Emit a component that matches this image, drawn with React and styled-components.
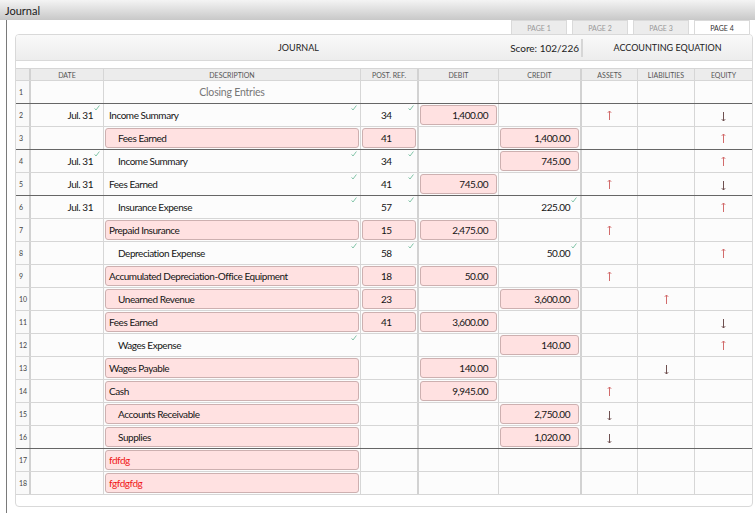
import React from "react";
import styled, { createGlobalStyle } from "styled-components";

const GlobalStyle = createGlobalStyle`
  html, body {
    margin: 0;
    padding: 0;
    background: #ffffff;
  }
  body {
    font-family: Lato, "Open Sans", sans-serif;
    color: #222;
  }
`;

// column widths, the thick ones carry a 2px right border
const COLS = "15px 73px 257px 58px 80px 83px 56px 57px 57px";
const THICK = [0, 3, 5];

const rows = [
  { desc: "Closing Entries", title: true, sep: true },
  {
    date: "Jul. 31", dateOk: true, desc: "Income Summary", descOk: true,
    ref: "34", refOk: true, debit: "1,400.00", debitIn: true, assets: "up", equity: "down",
  },
  {
    desc: "Fees Earned", indent: true, descIn: true, ref: "41", refIn: true,
    credit: "1,400.00", creditIn: true, equity: "up", sep: true,
  },
  {
    date: "Jul. 31", dateOk: true, desc: "Income Summary", indent: true, descOk: true,
    ref: "34", refOk: true, credit: "745.00", creditIn: true, equity: "up",
  },
  {
    date: "Jul. 31", desc: "Fees Earned", descOk: true, ref: "41", refOk: true,
    debit: "745.00", debitIn: true, assets: "up", equity: "down", sep: true,
  },
  {
    date: "Jul. 31", desc: "Insurance Expense", indent: true, descOk: true,
    ref: "57", refOk: true, credit: "225.00", creditOk: true, equity: "up",
  },
  {
    desc: "Prepaid Insurance", descIn: true, ref: "15", refIn: true,
    debit: "2,475.00", debitIn: true, assets: "up",
  },
  {
    desc: "Depreciation Expense", indent: true, descOk: true, ref: "58", refOk: true,
    credit: "50.00", creditOk: true, equity: "up",
  },
  {
    desc: "Accumulated Depreciation-Office Equipment", descIn: true, ref: "18", refIn: true,
    debit: "50.00", debitIn: true, assets: "up",
  },
  {
    desc: "Unearned Revenue", indent: true, descIn: true, ref: "23", refIn: true,
    credit: "3,600.00", creditIn: true, liab: "up",
  },
  {
    desc: "Fees Earned", descIn: true, ref: "41", refIn: true,
    debit: "3,600.00", debitIn: true, equity: "down",
  },
  {
    desc: "Wages Expense", indent: true, descOk: true,
    credit: "140.00", creditIn: true, equity: "up",
  },
  { desc: "Wages Payable", descIn: true, debit: "140.00", debitIn: true, liab: "down" },
  { desc: "Cash", descIn: true, debit: "9,945.00", debitIn: true, assets: "up" },
  {
    desc: "Accounts Receivable", indent: true, descIn: true,
    credit: "2,750.00", creditIn: true, assets: "down",
  },
  {
    desc: "Supplies", indent: true, descIn: true,
    credit: "1,020.00", creditIn: true, assets: "down", sep: true,
  },
  { desc: "fdfdg", descIn: true, bad: true },
  { desc: "fgfdgfdg", descIn: true, bad: true },
];

const Window = styled.div`
  width: 755px;
  height: 513px;
  overflow: hidden;
`;

const TitleBar = styled.div`
  height: 20px;
  display: flex;
  align-items: center;
  padding-left: 5px;
  background: linear-gradient(#f4f4f4, #c8c8c8);
  font-size: 11px;
  color: #1a1a1a;
`;

const Body = styled.div`
  height: 493px;
  margin-left: 6px;
  border-left: 1px solid #7a7a7a;
  padding: 0 2px 0 8px;
`;

const Tabs = styled.div`
  height: 14px;
  display: flex;
  justify-content: flex-end;
  gap: 5px;
  padding-right: 3px;
`;

const Tab = styled.div`
  width: 56px;
  box-sizing: border-box;
  border: 1px solid #dadada;
  border-bottom: none;
  background: ${({ $active }) => ($active ? "#ffffff" : "#ececec")};
  color: ${({ $active }) => ($active ? "#333" : "#999")};
  font-size: 7px;
  display: flex;
  align-items: center;
  justify-content: center;
  padding-top: 1px;
`;

const Panel = styled.div`
  height: 473px;
  box-sizing: border-box;
  border: 1px solid #d9d9d9;
  border-radius: 4px;
  overflow: hidden;
`;

const Header = styled.div`
  height: 25px;
  display: grid;
  grid-template-columns: 565px 1fr;
  align-items: center;
  background: linear-gradient(#f9f9f9, #ededed);
  border-bottom: 1px solid #d9d9d9;
`;

const HeaderLeft = styled.div`
  display: grid;
  grid-template-columns: 1fr auto 1fr;
  align-items: center;
  font-size: 9px;
  color: #222;
`;

const Score = styled.span`
  justify-self: end;
  font-size: 10px;
  padding-right: 2px;
`;

const HeaderRight = styled.div`
  height: 18px;
  border-left: 2px solid #d6d6d6;
  display: flex;
  align-items: center;
  justify-content: center;
  font-size: 9px;
  color: #222;
`;

const Table = styled.div`
  margin-top: 7px;
`;

const Row = styled.div`
  display: grid;
  grid-template-columns: ${COLS};
  height: ${({ $head }) => ($head ? "13px" : "23px")};
  box-sizing: border-box;
  border-top: ${({ $head }) => ($head ? "1px solid #d6d6d6" : "none")};
  border-bottom: 1px solid ${({ $sep }) => ($sep ? "#666" : "#d6d6d6")};
  background: ${({ $head }) => ($head ? "#ececec" : "#fcfcfc")};
`;

const Cell = styled.div`
  position: relative;
  box-sizing: border-box;
  border-right: ${({ $thick, $last }) =>
    $last ? "none" : $thick ? "2px solid #d2d2d2" : "1px solid #d6d6d6"};
  display: flex;
  align-items: center;
  justify-content: ${({ $align }) => $align || "flex-start"};
  padding: ${({ $pad }) => $pad || "0"};
  font-size: 10px;
  letter-spacing: -0.45px;
  color: #151515;
  white-space: nowrap;
  min-width: 0;
`;

const HeadCell = styled(Cell)`
  justify-content: center;
  font-size: 7px;
  letter-spacing: 0;
  color: #555;
  padding-top: 1px;
`;

const RowNum = styled(Cell)`
  font-size: 7px;
  letter-spacing: 0;
  color: #444;
  padding-left: 3px;
  background: #f9f9f9;
`;

const Field = styled.div`
  flex: 1;
  align-self: stretch;
  margin: 1px;
  box-sizing: border-box;
  border: 1px solid #cdb0b0;
  border-radius: 3px;
  background: #ffe1e1;
  display: flex;
  align-items: center;
  justify-content: ${({ $align }) => $align || "flex-start"};
  padding: ${({ $pad }) => $pad || "0"};
  color: ${({ $bad }) => ($bad ? "#f01818" : "#151515")};
`;

const Title = styled.span`
  flex: 1;
  text-align: center;
  color: #777777;
  font-size: 10.5px;
  letter-spacing: -0.2px;
`;

const Tick = styled.svg`
  position: absolute;
  top: 1px;
  right: 3px;
`;

const ArrowWrap = styled.div`
  flex: 1;
  display: flex;
  justify-content: center;
  padding-top: ${({ $dir }) => ($dir === "down" ? "3px" : "0")};
`;

const Check = () => (
  <Tick width="6" height="6" viewBox="0 0 6 6">
    <path d="M0.6 3.4 L2 5 L5.4 0.5" stroke="#82c4a8" strokeWidth="1" fill="none" />
  </Tick>
);

const Arrow = ({ dir }) => (
  <ArrowWrap $dir={dir}>
    <svg width="5" height="10" viewBox="0 0 5 10">
      {dir === "up" ? (
        <path d="M2.5 1 V10 M0.8 2.8 L2.5 1 L4.2 2.8" stroke="#d26b6b" strokeWidth="1" fill="none" />
      ) : (
        <path d="M2.5 0 V9 M0.8 7.2 L2.5 9 L4.2 7.2" stroke="#6f5050" strokeWidth="1" fill="none" />
      )}
    </svg>
  </ArrowWrap>
);

// one cell that may hold plain text, a pink field, and a tick
const Entry = ({ value, field, ok, align, pad, fieldPad, thick, bad }) => (
  <Cell $thick={thick} $align={align} $pad={field ? "0" : pad}>
    {field ? (
      <Field $align={align} $pad={fieldPad} $bad={bad}>
        {value}
      </Field>
    ) : (
      value
    )}
    {ok && <Check />}
  </Cell>
);

const heads = ["", "DATE", "DESCRIPTION", "POST. REF.", "DEBIT", "CREDIT", "ASSETS", "LIABILITIES", "EQUITY"];

const App = () => {
  return (
    <Window>
      <GlobalStyle />
      <TitleBar>Journal</TitleBar>
      <Body>
        <Tabs>
          <Tab>PAGE 1</Tab>
          <Tab>PAGE 2</Tab>
          <Tab>PAGE 3</Tab>
          <Tab $active>PAGE 4</Tab>
        </Tabs>
        <Panel>
          <Header>
            <HeaderLeft>
              <span />
              <span>JOURNAL</span>
              <Score>Score: 102/226</Score>
            </HeaderLeft>
            <HeaderRight>ACCOUNTING EQUATION</HeaderRight>
          </Header>
          <Table>
            <Row $head>
              {heads.map((h, i) => (
                <HeadCell key={i} $thick={THICK.includes(i)} $last={i === 8}>
                  {h}
                </HeadCell>
              ))}
            </Row>
            {rows.map((r, i) => (
              <Row key={i} $sep={r.sep}>
                <RowNum $thick>{i + 1}</RowNum>
                <Entry value={r.date} ok={r.dateOk} align="flex-end" pad="0 10px 0 0" />
                {r.title ? (
                  <Cell>
                    <Title>{r.desc}</Title>
                  </Cell>
                ) : (
                  <Entry
                    value={r.desc}
                    field={r.descIn}
                    ok={r.descOk}
                    bad={r.bad}
                    pad={r.indent ? "0 0 0 14px" : "0 0 0 5px"}
                    fieldPad={r.indent ? "0 0 0 12px" : "0 0 0 3px"}
                  />
                )}
                <Entry
                  value={r.ref}
                  field={r.refIn}
                  ok={r.refOk}
                  thick
                  pad="0 0 0 20px"
                  fieldPad="0 0 0 18px"
                />
                <Entry
                  value={r.debit}
                  field={r.debitIn}
                  align="flex-end"
                  pad="0 10px 0 0"
                  fieldPad="0 8px 0 0"
                />
                <Entry
                  value={r.credit}
                  field={r.creditIn}
                  ok={r.creditOk}
                  thick
                  align="flex-end"
                  pad="0 10px 0 0"
                  fieldPad="0 8px 0 0"
                />
                <Cell>{r.assets && <Arrow dir={r.assets} />}</Cell>
                <Cell>{r.liab && <Arrow dir={r.liab} />}</Cell>
                <Cell $last>{r.equity && <Arrow dir={r.equity} />}</Cell>
              </Row>
            ))}
          </Table>
        </Panel>
      </Body>
    </Window>
  );
};

export default App;
